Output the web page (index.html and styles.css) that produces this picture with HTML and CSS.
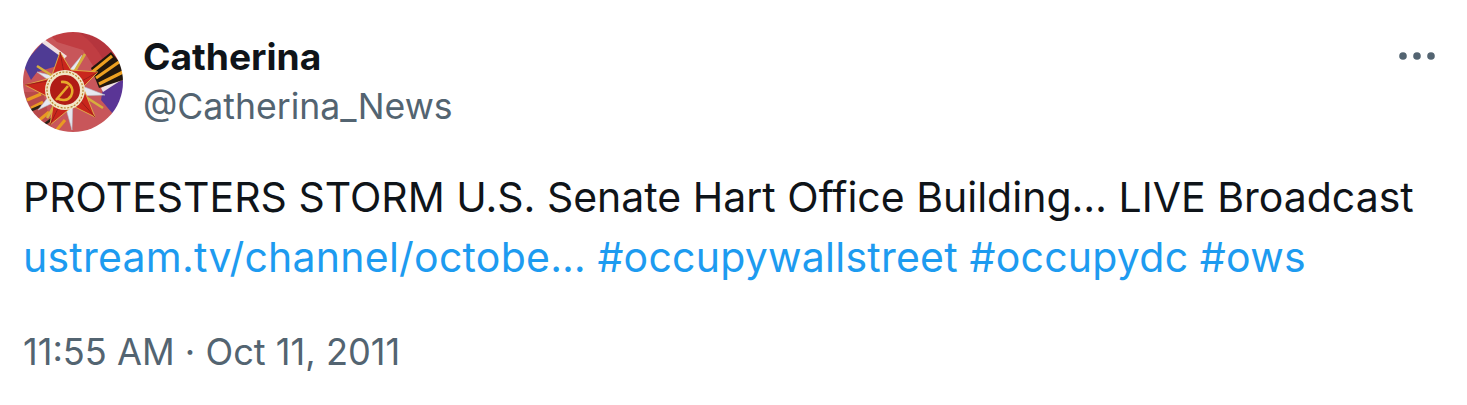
FILE: index.html
```html
<!DOCTYPE html>
<html lang="en">
<head>
  <meta charset="UTF-8">
  <title>Tweet</title>
  <link rel="stylesheet" href="styles.css">
</head>
<body>
  <div class="tweet">
    <div class="tweet-head">
      <svg class="avatar" viewBox="0 0 100 100">
        <defs>
          <clipPath id="round"><circle cx="50" cy="50" r="50"/></clipPath>
          <filter id="soft"><feGaussianBlur stdDeviation="0.5"/></filter>
        </defs>
        <g clip-path="url(#round)" filter="url(#soft)">
          <rect width="100" height="100" fill="#c8565a"/>
          <path d="M24 0H100V36L74 40 60 18 34 10Z" fill="#c03c42"/>
          <path d="M55 0C70 10 78 22 82 32L100 22V0Z" fill="#b5343c"/>
          <path d="M0 32L20 10 40 24 34 34 14 40 8 48Z" fill="#4f3a94"/>
          <path d="M21 7L44 24 41 27 19 11Z" fill="#f0dfe0"/>
          <path d="M80 56L100 48V84L90 82 78 68Z" fill="#5a3596"/>
          <path d="M78 56L100 44V47L80 60Z" fill="#efe0e4"/>
          <path d="M0 60H20L30 100H0Z" fill="#b84a4c"/>
          <path d="M68 36L88 20 100 34V48L76 56Z" fill="#20180f"/>
          <path d="M68 41L89 24M73 46L96 30M76 52L100 40" stroke="#eda020" stroke-width="3.2" fill="none"/>
          <path d="M4 68L18 62M8 76L20 70M14 90L26 80M32 100L42 88" stroke="#e99a22" stroke-width="3" fill="none"/>
          <path d="M4 80L18 74M22 92L30 86" stroke="#2a2018" stroke-width="2.5" fill="none"/>
          <path d="M59 23L49 50 82 63 50 64 49 98 40 66 15 78 34 54 14 40 40 46Z" fill="#e6e8f0" stroke="#b8bcc8" stroke-width="0.6"/>
          <path d="M62 22L24 86M14 34L80 76" stroke="#d6ae3c" stroke-width="2.6"/>
          <path d="M37 20L48 38 75 40 60 55 72 85 50 74 27 93 31 68 2 53 28 46Z" fill="#c9281f" stroke="#e2b448" stroke-width="0.9"/>
          <path d="M37 20L42 46 2 53M75 40L46 56 72 85M27 93L42 62" fill="none" stroke="#8e1a16" stroke-width="0.8"/>
          <circle cx="42" cy="58" r="20" fill="#f1e6c6"/>
          <circle cx="42" cy="58" r="18" fill="none" stroke="#b9822c" stroke-width="1.2" stroke-dasharray="2 1.4"/>
          <circle cx="42" cy="58" r="15" fill="#b01c18"/>
          <path d="M38 50C46 49 52 56 48 64C45 69 38 69 34 66M33 68L45 54" stroke="#e7ab2c" stroke-width="2.6" fill="none"/>
        </g>
      </svg>
      <div class="names">
        <div class="name">Catherina</div>
        <div class="handle">@Catherina_News</div>
      </div>
      <svg class="more" viewBox="0 0 36 8">
        <circle cx="4" cy="4" r="3.8"/>
        <circle cx="18" cy="4" r="3.8"/>
        <circle cx="32" cy="4" r="3.8"/>
      </svg>
    </div>
    <p class="tweet-text">PROTESTERS STORM U.S. Senate Hart Office Building… LIVE Broadcast <a href="#">ustream.tv/channel/octobe…</a> <a href="#">#occupywallstreet</a> <a href="#">#occupydc</a> <a href="#">#ows</a></p>
    <div class="tweet-time">11:55 AM · Oct 11, 2011</div>
  </div>
</body>
</html>
```
FILE: styles.css
```css
* {
  box-sizing: border-box;
}

body {
  margin: 0;
  background-color: #fff;
  font-family: Inter, "Liberation Sans", sans-serif;
  color: #0f1419;
}

.tweet {
  padding: 32px 32px 0 23px;
}

.tweet-head {
  display: flex;
  align-items: flex-start;
}

.avatar {
  width: 100px;
  height: 100px;
  flex: none;
}

.names {
  flex: 1;
  margin-left: 20px;
}

.name {
  font-size: 37.2px;
  font-weight: 700;
  line-height: 50px;
}

.handle {
  font-size: 35.6px;
  line-height: 50px;
  color: #536471;
}

.more {
  width: 36px;
  height: 8px;
  margin-top: 20px;
  fill: #536471;
}

.tweet-text {
  margin: 35px 0 0;
  font-size: 41px;
  line-height: 60px;
}

.tweet-text a {
  color: #1d9bf0;
  text-decoration: none;
  letter-spacing: 0.24px;
}

.tweet-time {
  margin-top: 40px;
  font-size: 36.2px;
  line-height: 50px;
  color: #536471;
}
```
